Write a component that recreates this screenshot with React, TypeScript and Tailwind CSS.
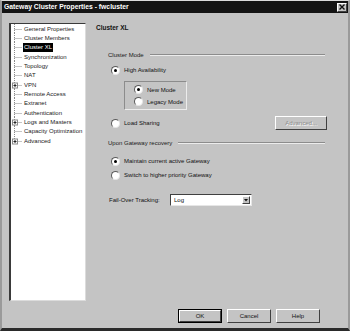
import React from 'react';

const treeItems = [
  { label: 'General Properties' },
  { label: 'Cluster Members' },
  { label: 'Cluster XL', selected: true },
  { label: 'Synchronization' },
  { label: 'Topology' },
  { label: 'NAT' },
  { label: 'VPN', expand: true },
  { label: 'Remote Access' },
  { label: 'Extranet' },
  { label: 'Authentication' },
  { label: 'Logs and Masters', expand: true },
  { label: 'Capacity Optimization' },
  { label: 'Advanced', expand: true, last: true },
];

function Connector({ expand, last }: { expand?: boolean; last?: boolean }) {
  return (
    <svg width="11" height="10" viewBox="0 0 11 10" className="shrink-0">
      <line x1="3.5" y1="0" x2="3.5" y2={last ? 5 : 10} stroke="#8a8a8a" strokeWidth="1" strokeDasharray="1 1" />
      <line x1="3.5" y1="5.5" x2="11" y2="5.5" stroke="#8a8a8a" strokeWidth="1" strokeDasharray="1 1" />
      {expand && (
        <g>
          <rect x="1.5" y="3" width="5" height="5" fill="#fff" stroke="#8a8a8a" />
          <line x1="2.5" y1="5.5" x2="5.5" y2="5.5" stroke="#222" />
          <line x1="4" y1="4" x2="4" y2="7" stroke="#222" />
        </g>
      )}
    </svg>
  );
}

function Radio({ checked }: { checked?: boolean }) {
  return (
    <span className="flex w-[9px] h-[9px] shrink-0 items-center justify-center rounded-full border border-t-[#5a5a5a] border-l-[#5a5a5a] border-r-[#e6e6e6] border-b-[#e6e6e6] bg-white">
      {checked && <span className="w-[3px] h-[3px] rounded-full bg-black" />}
    </span>
  );
}

function GroupHeader({ label }: { label: string }) {
  return (
    <div className="flex h-[10px] items-center">
      <span className="ml-[12px] text-[#1a1a1a]">{label}</span>
      <span className="ml-[6px] mr-[5px] flex-1 border-t border-b border-t-[#8c8c8c] border-b-[#ececec]" />
    </div>
  );
}

function Button({ label, isDefault }: { label: string; isDefault?: boolean }) {
  return (
    <div className={`flex h-[14px] w-[44px] ${isDefault ? 'border border-black' : ''}`}>
      <div className="flex flex-1 items-center justify-center border border-t-white border-l-white border-r-[#404040] border-b-[#404040] bg-[#c4c4c4]">
        <span className="text-[#111]">{label}</span>
      </div>
    </div>
  );
}

export default function App() {
  return (
    <div className="flex h-[331px] w-[350px] flex-col border-b-[3px] border-b-[#2a2a2a] border-x-2 border-x-[#9a9a9a] border-t border-t-[#dcdcdc] bg-[#c4c4c4] font-['Liberation_Sans',Arial,sans-serif] text-[6px] leading-none text-[#111] overflow-hidden">
      {/* Title bar */}
      <div className="flex h-[12px] shrink-0 items-center justify-between bg-[#141414] pl-[2px] pr-[1px]">
        <span className="text-[6.8px] font-bold text-white">Gateway Cluster Properties - fwcluster</span>
        <span className="flex h-[9px] w-[10px] items-center justify-center border border-t-white border-l-white border-r-[#404040] border-b-[#404040] bg-[#c4c4c4]">
          <svg width="6" height="6" viewBox="0 0 6 6">
            <path d="M0.5 0.5 L5.5 5.5 M5.5 0.5 L0.5 5.5" stroke="#111" strokeWidth="1.4" />
          </svg>
        </span>
      </div>

      {/* Body */}
      <div className="flex items-start pl-[7px] pt-[10px]">
        <div className="h-[278px] w-[77px] shrink-0 border-l-2 border-t border-l-[#3a3a3a] border-t-[#3a3a3a] border-r border-b border-r-[#dcdcdc] border-b-[#dcdcdc] bg-white">
          {treeItems.map((it) => (
            <div key={it.label} className="flex h-[9.33px] items-center">
              <Connector expand={it.expand} last={it.last} />
              <span
                className={`ml-[1px] whitespace-nowrap px-[1px] py-[1.5px] ${
                  it.selected ? 'bg-black text-white' : 'text-[#1a1a1a]'
                }`}
              >
                {it.label}
              </span>
            </div>
          ))}
        </div>

        <div className="ml-[10px] flex w-[234px] flex-col">
          <div className="flex h-[10px] items-center font-bold text-[6.5px]">Cluster XL</div>

          <div className="mt-[17px]">
            <GroupHeader label="Cluster Mode" />
          </div>

          <div className="mt-[5px] flex h-[10px] items-center gap-[4px] pl-[15px]">
            <Radio checked />
            <span>High Availability</span>
          </div>

          <div className="ml-[28px] mt-[6px] flex h-[29px] w-[63px] flex-col justify-center gap-[3px] border border-t-[#8c8c8c] border-l-[#8c8c8c] border-r-[#ececec] border-b-[#ececec] pl-[9px]">
            <div className="flex h-[9px] items-center gap-[4px]">
              <Radio checked />
              <span>New Mode</span>
            </div>
            <div className="flex h-[9px] items-center gap-[4px]">
              <Radio />
              <span>Legacy Mode</span>
            </div>
          </div>

          <div className="mt-[6px] flex h-[14px] items-center pl-[15px] pr-[3px]">
            <Radio />
            <span className="ml-[4px] flex-1">Load Sharing</span>
            <div className="flex h-[14px] w-[52px] items-center justify-center border border-t-white border-l-white border-r-[#404040] border-b-[#404040]">
              <span className="text-[#8c8c8c] [text-shadow:1px_1px_0_#fff]">Advanced...</span>
            </div>
          </div>

          <div className="mt-[8px]">
            <GroupHeader label="Upon Gateway recovery" />
          </div>

          <div className="mt-[8px] flex h-[10px] items-center gap-[4px] pl-[15px]">
            <Radio checked />
            <span>Maintain current active Gateway</span>
          </div>
          <div className="mt-[4px] flex h-[10px] items-center gap-[4px] pl-[15px]">
            <Radio />
            <span>Switch to higher priority Gateway</span>
          </div>

          <div className="mt-[14px] flex h-[12px] items-center pl-[13px]">
            <span className="w-[61px]">Fail-Over Tracking:</span>
            <div className="flex h-[12px] w-[82px] items-center border border-t-[#404040] border-l-[#404040] border-r-[#e6e6e6] border-b-[#e6e6e6] bg-white pl-[3px] pr-[1px]">
              <span className="flex-1">Log</span>
              <span className="flex h-[8px] w-[8px] items-center justify-center border border-t-white border-l-white border-r-[#404040] border-b-[#404040] bg-[#c4c4c4]">
                <svg width="4" height="3" viewBox="0 0 4 3">
                  <path d="M0 0 H4 L2 2.5 Z" fill="#111" />
                </svg>
              </span>
            </div>
          </div>
        </div>
      </div>

      {/* Buttons */}
      <div className="mt-[8px] flex justify-end gap-[5px] pr-[28px]">
        <Button label="OK" isDefault />
        <Button label="Cancel" />
        <Button label="Help" />
      </div>
    </div>
  );
}
